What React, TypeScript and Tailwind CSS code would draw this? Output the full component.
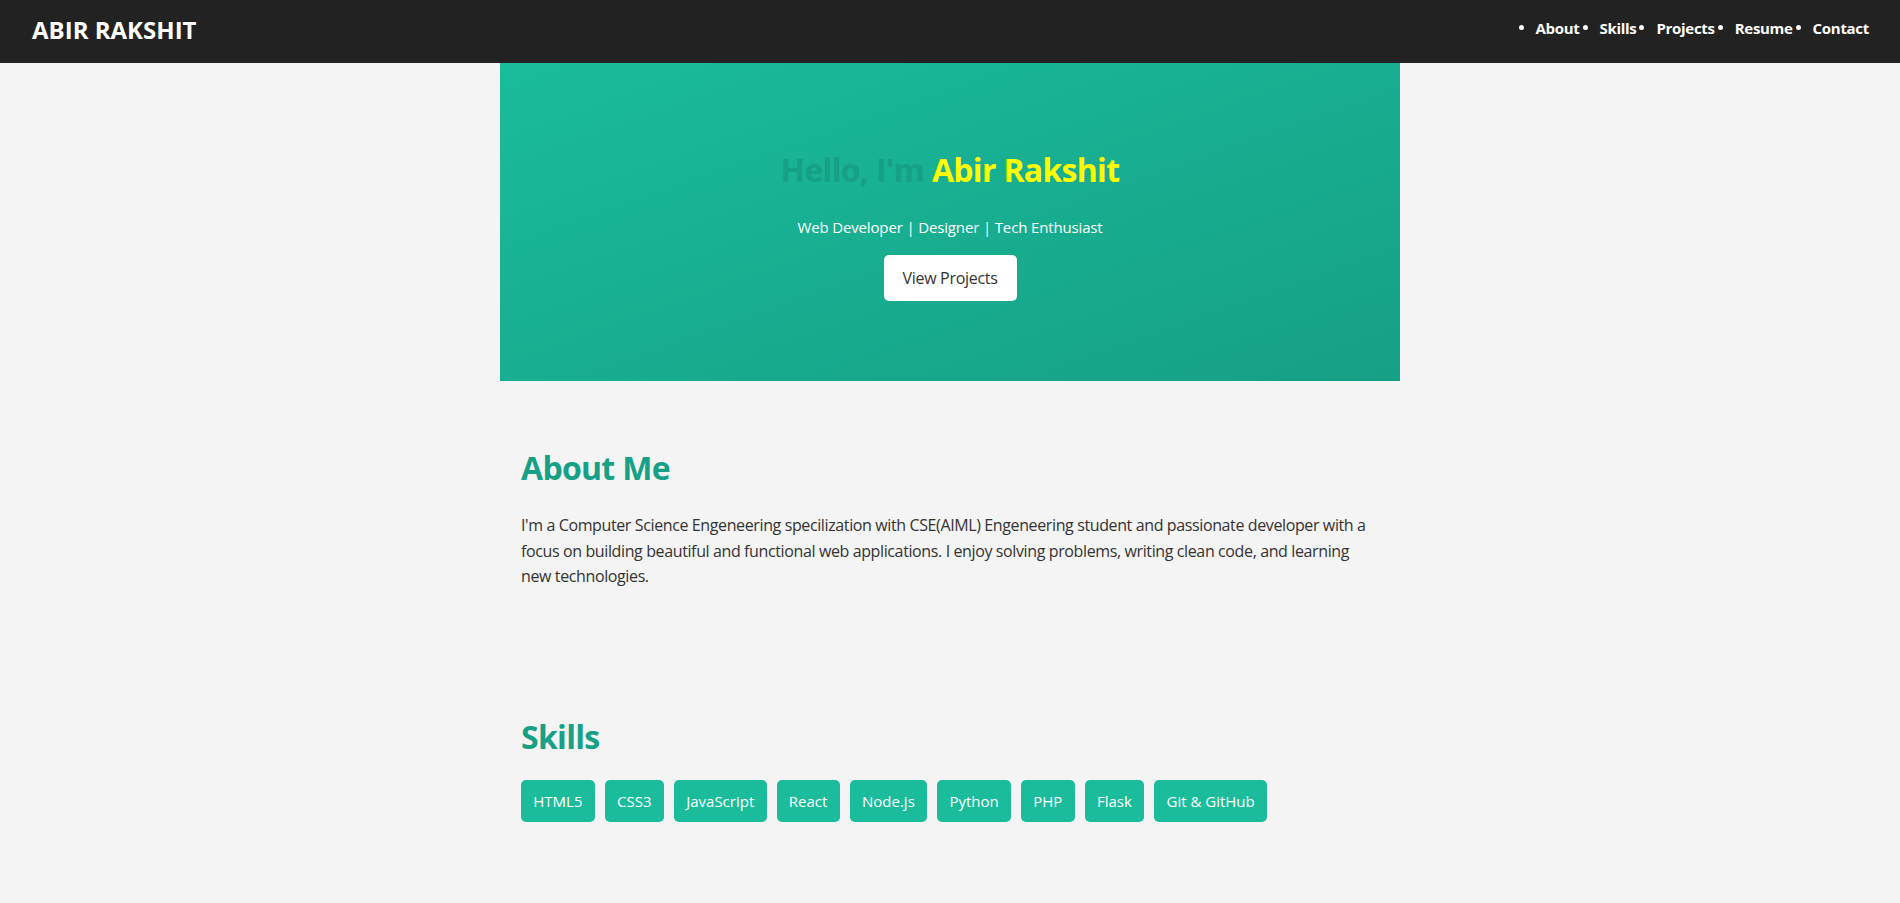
import React from "react";

const navItems = ["About", "Skills", "Projects", "Resume", "Contact"];
const skills = ["HTML5", "CSS3", "JavaScript", "React", "Node.js", "Python", "PHP", "Flask", "Git & GitHub"];

export default function App() {
  return (
    <div className="min-h-screen bg-[#f4f4f4] font-['Open_Sans','Noto_Sans',sans-serif]">
      <header className="h-[63px] bg-[#222222] text-white flex items-center justify-between pl-[32px] pr-[31px]">
        <div className="text-[24px] leading-[32px] font-bold mb-[3px]">ABIR RAKSHIT</div>
        <nav className="mb-[8px]">
          <ul className="flex items-center">
            {navItems.map((item) => (
              <li key={item} className="flex items-center ml-[3px] text-[15px] leading-[24px] font-bold tracking-[-0.3px]">
                <span className="w-[5px] h-[5px] rounded-full bg-white mr-[12px]" />
                <a href="#" className="text-white">{item}</a>
              </li>
            ))}
          </ul>
        </nav>
      </header>

      <main className="w-[900px] mx-auto">
        <section className="h-[318px] bg-gradient-to-br from-[#1abc9c] to-[#16a085] pt-[87px] flex flex-col items-center text-center">
          <h1 className="text-[32px] leading-[40px] font-bold tracking-[-0.7px]">
            <span className="text-[#16a085]">Hello, I'm </span>
            <span className="text-[#ffff00]">Abir Rakshit</span>
          </h1>
          <p className="mt-[25px] text-[15px] leading-[24px] text-white tracking-[-0.15px]">
            Web Developer | Designer | Tech Enthusiast
          </p>
          <button className="mt-[16px] w-[133px] h-[46px] bg-white rounded-[5px] text-[#333] text-[16px] tracking-[-0.3px]">
            View Projects
          </button>
        </section>

        <section className="pt-[67px] pl-[21px] pr-[20px]">
          <h2 className="text-[32px] leading-[40px] font-bold text-[#16a085] tracking-[-0.7px]">About Me</h2>
          <p className="mt-[25px] text-[16px] leading-[25.6px] text-[#333] tracking-[-0.38px]">
            I'm a Computer Science Engeneering specilization with CSE(AIML) Engeneering student and passionate developer with a focus on building beautiful and functional web applications. I enjoy solving problems, writing clean code, and learning new technologies.
          </p>
        </section>

        <section className="pt-[127px] pl-[21px] pr-[20px]">
          <h2 className="text-[32px] leading-[40px] font-bold text-[#16a085] tracking-[-0.7px]">Skills</h2>
          <div className="mt-[23.5px] flex flex-wrap gap-[10px]">
            {skills.map((s) => (
              <span key={s} className="h-[41.5px] px-[12.3px] flex items-center bg-[#1abc9c] text-white rounded-[5px] text-[15px]">
                {s}
              </span>
            ))}
          </div>
        </section>
      </main>
    </div>
  );
}
